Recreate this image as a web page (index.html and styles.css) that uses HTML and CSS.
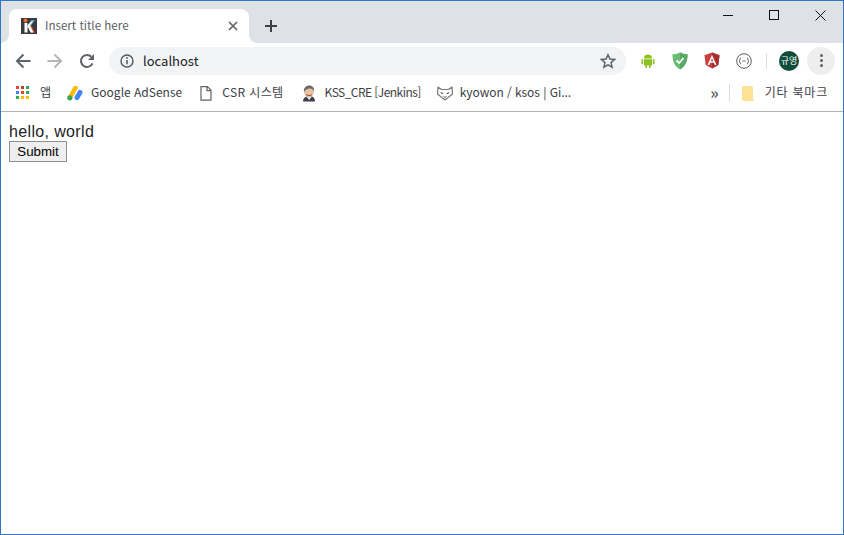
FILE: index.html
```html
<!DOCTYPE html>
<html lang="ko">
<head>
<meta charset="utf-8">
<title>Insert title here</title>
<link rel="stylesheet" href="styles.css">
</head>
<body>
<div class="window">
  <header class="chrome">
    <div class="tabstrip">
      <div class="tab">
        <svg class="favicon" width="16" height="16" viewBox="0 0 16 16"><rect width="16" height="16" fill="#3a3a3c"/><circle cx="4.500" cy="2.500" r="2" fill="#e8702a"/><path d="M7 9l3-2 4 7.500h-4z" fill="#d8503a"/><path d="M7 7l3.500-5h3.500L9.500 8z" fill="#49b6c6"/><path d="M3.500 5h3v9.500h-3z" fill="#fff"/><path d="M6.500 7.500L10 3.500h2L6.500 10.500zM7 9l2-1.500 3.500 7h-3z" fill="#fff"/></svg>
        <span class="tab-title">Insert title here</span>
        <svg class="tab-close" width="10" height="10" viewBox="0 0 10 10"><path d="M1 1l8 8M9 1l-8 8" stroke="#5f6368" stroke-width="1.700"/></svg>
      </div>
      <svg class="newtab" width="12" height="12" viewBox="0 0 12 12"><path d="M6 0v12M0 6h12" stroke="#3c4043" stroke-width="2"/></svg>
      <div class="winctl">
        <svg class="winbtn" width="10" height="10" viewBox="0 0 10 10"><path d="M0 5.500h10" stroke="#111" stroke-width="1"/></svg>
        <svg class="winbtn" width="10" height="10" viewBox="0 0 10 10"><rect x=".5" y=".5" width="9" height="9" fill="none" stroke="#111"/></svg>
        <svg class="winbtn" width="11" height="11" viewBox="0 0 11 11"><path d="M.5.500l10 10M10.500.500l-10 10" stroke="#111" stroke-width="1"/></svg>
      </div>
    </div>
    <div class="toolbar">
      <svg class="nav" width="16" height="16" viewBox="0 0 16 16"><path d="M15.500 8H2M8.500 1.500L2 8l6.500 6.500" fill="none" stroke="#5f6368" stroke-width="2"/></svg>
      <svg class="nav" width="16" height="16" viewBox="0 0 16 16"><path d="M.5 8H14M7.500 1.500L14 8l-6.500 6.500" fill="none" stroke="#b4b6b9" stroke-width="2"/></svg>
      <svg class="nav" width="16" height="16" viewBox="0 0 16 16"><path d="M13.500 10.300A6 6 0 1 1 12.300 3.800" fill="none" stroke="#5f6368" stroke-width="2"/><path d="M15 1v6H9z" fill="#5f6368"/></svg>
      <div class="omnibox">
        <svg width="14" height="14" viewBox="0 0 14 14"><circle cx="7" cy="7" r="6" fill="none" stroke="#55585c" stroke-width="1.400"/><path d="M7 6v4.200" stroke="#55585c" stroke-width="1.500"/><circle cx="7" cy="4" r=".9" fill="#55585c"/></svg>
        <span class="url">localhost</span>
        <svg class="star" width="16" height="16" viewBox="0 0 16 16"><path d="M8 1.800l1.900 4.300 4.700.4-3.600 3.100 1.100 4.600L8 11.800l-4.100 2.400L5 9.600 1.400 6.500l4.700-.4z" fill="none" stroke="#5f6368" stroke-width="1.500"/></svg>
      </div>
      <div class="extensions">
        <svg width="16" height="16" viewBox="-1 0 16 16"><path d="M3 5.500a4 4 0 0 1 8 0zM3 6.300h8v6.200H9.500v2.500h-1.500v-2.500H6V15H4.500v-2.500H3zM.5 6.300h1.700v5H.5zM11.800 6.300h1.700v5h-1.700z" fill="#8cc11f"/></svg>
        <svg width="16" height="18" viewBox="0 0 16 18"><path d="M8 .5C5.500 1.800 3 2.300.5 2.300.5 9 2 14 8 17.500 14 14 15.500 9 15.500 2.300 13 2.300 10.500 1.800 8 .5z" fill="#68bc71"/><path d="M8 .5v17c6-3.500 7.500-8.500 7.500-15.200C13 2.300 10.500 1.800 8 .5z" fill="#5aa868"/><path d="M4.500 8.500L7.200 11l4.300-5" fill="none" stroke="#fff" stroke-width="1.800"/></svg>
        <svg width="16" height="17" viewBox="0 0 16 17"><path d="M8 .5L.5 3.200l1.200 9.800L8 16.500l6.300-3.500 1.200-9.800z" fill="#c8403e"/><path d="M8 .5v16l6.300-3.500 1.200-9.800z" fill="#a82f30"/><path d="M8 3L3.500 13h1.700l.9-2.300h3.800l.9 2.300h1.700zM6.800 9.200L8 6.300l1.200 2.900z" fill="#fff"/></svg>
        <svg width="16" height="16" viewBox="0 0 16 16"><circle cx="8" cy="8" r="7.300" fill="none" stroke="#55585c" stroke-width="1"/><path d="M5 5q-1 0-1 1v1l-.8 1 .8 1v1q0 1 1 1M11 5q1 0 1 1v1l.8 1-.8 1v1q0 1-1 1M6.500 8h3" fill="none" stroke="#55585c" stroke-width=".9"/></svg>
      </div>
      <span class="divider"></span>
      <span class="avatar">규영</span>
      <span class="menu"><i></i><i></i><i></i></span>
    </div>
    <nav class="bookmarks">
      <a class="bm bm-apps">
        <svg width="14" height="14" viewBox="0 0 14 14"><g><rect width="3" height="3" fill="#ea4335"/><rect x="5" width="3" height="3" fill="#c5392c"/><rect x="10" width="3" height="3" fill="#34a853"/><rect y="5" width="3" height="3" fill="#4285f4"/><rect x="5" y="5" width="3" height="3" fill="#ea4335"/><rect x="10" y="5" width="3" height="3" fill="#34a853"/><rect y="10" width="3" height="3" fill="#34a853"/><rect x="5" y="10" width="3" height="3" fill="#fbbc05"/><rect x="10" y="10" width="3" height="3" fill="#fbbc05"/></g></svg>
        <span>앱</span>
      </a>
      <a class="bm bm-ads">
        <svg width="16" height="15" viewBox="0 0 16 15"><path d="M8.600 1.600L3 11.300" stroke="#fbbc04" stroke-width="4.400" stroke-linecap="round"/><path d="M13 6.500l-3 5" stroke="#4285f4" stroke-width="5" stroke-linecap="round"/><circle cx="2.800" cy="11.800" r="2.600" fill="#34a853"/></svg>
        <span>Google AdSense</span>
      </a>
      <a class="bm bm-doc">
        <svg width="12" height="15" viewBox="0 0 12 15"><path d="M1 .7h6.500L11 4.200v10H1zM7 .7v4h4" fill="none" stroke="#5f6368" stroke-width="1.200"/></svg>
        <span>CSR 시스템</span>
      </a>
      <a class="bm bm-jenkins">
        <svg width="16" height="17" viewBox="0 0 16 17"><path d="M2 16.500c0-3 2-4.500 4-5h5c2 1 3 2.500 3 5z" fill="#3d3d4a"/><path d="M5.500 12h5l-2.200 3z" fill="#eee"/><ellipse cx="8" cy="6.500" rx="5" ry="5.800" fill="#e6c3a5"/><path d="M3 7C2 2.500 6 0 9 .5c3 .3 4.500 3 4 6-1-2.500-3-3-5-3-2 .5-4 1.500-5 3.500z" fill="#6b6b6b"/><path d="M5 9.500c1.500 1.500 4.500 1.500 6 0" fill="none" stroke="#a0452e"/></svg>
        <span>KSS_CRE [Jenkins]</span>
      </a>
      <a class="bm bm-git">
        <svg width="16" height="15" viewBox="0 0 16 15"><path d="M1 1l3.500 2.500h7L15 1l.5 7L8 14 .5 8z" fill="#fff" stroke="#77797c" stroke-width="1.200" stroke-linejoin="round"/><path d="M3.500 6.500q2-1 3 1.500-2 .5-3-1.500zM12.500 6.500q-2-1-3 1.500 2 .5 3-1.500z" fill="#55585c"/><path d="M6.500 10.500l1.500 1 1.500-1" fill="none" stroke="#55585c"/></svg>
        <span>kyowon / ksos | Gi...</span>
      </a>
      <span class="more">»</span>
      <span class="divider divider-bm"></span>
      <a class="bm bm-folder">
        <svg width="12" height="15" viewBox="0 0 12 15"><path d="M.5 1.500a1 1 0 0 1 1-1H9.500a1 1 0 0 1 1 1V12l1 2.500H1.500a1 1 0 0 1-1-1z" fill="#fde293" stroke="#f6d97e" stroke-width=".6"/></svg>
        <span>기타 북마크</span>
      </a>
    </nav>
  </header>
  <main class="content">
    hello, world<br>
    <button class="submit" type="button">Submit</button>
  </main>
</div>
</body>
</html>
```
FILE: styles.css
```css
* { box-sizing: border-box; }
html, body { margin: 0; height: 100%; }
body { background: #fff; overflow: hidden; }
.window {
  width: 844px;
  height: 535px;
  border: 1px solid #2b79c2;
  display: flex;
  flex-direction: column;
}
.chrome {
  font-family: "Noto Sans CJK KR", "Noto Sans", sans-serif;
  font-size: 12px;
  color: #3c4043;
  border-bottom: 1px solid #b1b1b1;
  height: 111px;
  flex: none;
}
.tabstrip {
  height: 42px;
  background: #dee1e6;
  padding: 8px 0 0 8px;
  display: flex;
  align-items: flex-start;
}
.tab {
  position: relative;
  width: 240px;
  height: 34px;
  background: #fff;
  border-radius: 8px 8px 0 0;
  display: flex;
  align-items: center;
  padding: 0 0 0 12px;
}
.tab::before, .tab::after {
  content: "";
  position: absolute;
  bottom: 0;
  width: 8px;
  height: 8px;
}
.tab::before { left: -8px; background: radial-gradient(circle at 0 0, #dee1e6 7.500px, #fff 8px); }
.tab::after { right: -8px; background: radial-gradient(circle at 100% 0, #dee1e6 7.500px, #fff 8px); }
.favicon { flex: none; }
.tab-title { margin: 0 0 2px 8px; flex: 1; font-size: 11.600px; color: #5b5e62; }
.tab-close { margin-right: 11px; flex: none; }
.newtab { margin: 11px 0 0 16px; flex: none; }
.winctl {
  margin: 1px 0 0 auto;
  padding-right: 17px;
  display: flex;
  gap: 36px;
}
.winbtn { flex: none; }
.toolbar {
  height: 33px;
  background: #fff;
  display: flex;
  align-items: center;
  padding: 2px 0 0 14px;
}
.nav { flex: none; margin-right: 16px; }
.nav:nth-child(3) { margin-right: 14px; }
.omnibox {
  width: 517px;
  height: 28px;
  background: #f1f3f4;
  border-radius: 14px;
  display: flex;
  align-items: center;
  padding: 0 10px 0 11px;
}
.url { margin-left: 9px; font-size: 13px; color: #202124; flex: 1; }
.star { flex: none; }
.extensions {
  margin-left: 14px;
  display: flex;
  align-items: center;
  gap: 16px;
  width: 123px;
  flex: none;
}
.extensions svg { flex: none; }
.divider { width: 1px; height: 16px; background: #dadce0; flex: none; margin-left: 3px; }
.avatar {
  width: 20px;
  height: 20px;
  margin-left: 12px;
  border-radius: 50%;
  background: #0f4c3a;
  color: #fff;
  font-size: 9px;
  display: flex;
  align-items: center;
  justify-content: center;
  flex: none;
}
.menu {
  width: 28px;
  height: 28px;
  margin-left: 8px;
  border-radius: 50%;
  background: #eeeeee;
  display: flex;
  flex-direction: column;
  align-items: center;
  justify-content: center;
  gap: 2px;
  flex: none;
}
.menu i { width: 3px; height: 3px; border-radius: 50%; background: #5f6368; }
.bookmarks {
  height: 35px;
  background: #fff;
  display: flex;
  align-items: center;
  padding: 0 0 1px 15px;
}
.bm { display: flex; align-items: center; flex: none; }
.bm span { margin: 0 0 3px 8px; white-space: nowrap; }
.bm-apps span { margin-left: 10px; }
.bm-ads { margin-left: 16px; }
.bm-doc { margin-left: 18px; }
.bm-doc span { margin-left: 10px; letter-spacing: .4px; }
.bm-jenkins { margin-left: 17px; }
.bm-jenkins span { letter-spacing: -.55px; }
.bm-git { margin-left: 16px; }
.bm-git span { margin-left: 7px; letter-spacing: -.05px; }
.more { margin: 0 0 2px auto; font-size: 16px; font-weight: 700; color: #5f6368; }
.divider-bm { margin-left: 10px; height: 18px; }
.bm-folder { margin-left: 12px; margin-right: 15px; }
.bm-folder span { margin-left: 11px; letter-spacing: .8px; }
.content {
  flex: 1;
  padding: 10px 8px 8px;
  font-family: "Liberation Sans", Arial, sans-serif;
  font-size: 16px;
  letter-spacing: .35px;
  color: #222;
  line-height: 19px;
}
.submit {
  display: block;
  width: 58px;
  height: 21px;
  padding: 0;
  font-family: "Liberation Sans", Arial, sans-serif;
  font-size: 13.333px;
  letter-spacing: 0;
  color: #000;
  background: #efefef;
  border: 1px solid #8f8f8f;
  border-radius: 0;
}
```
